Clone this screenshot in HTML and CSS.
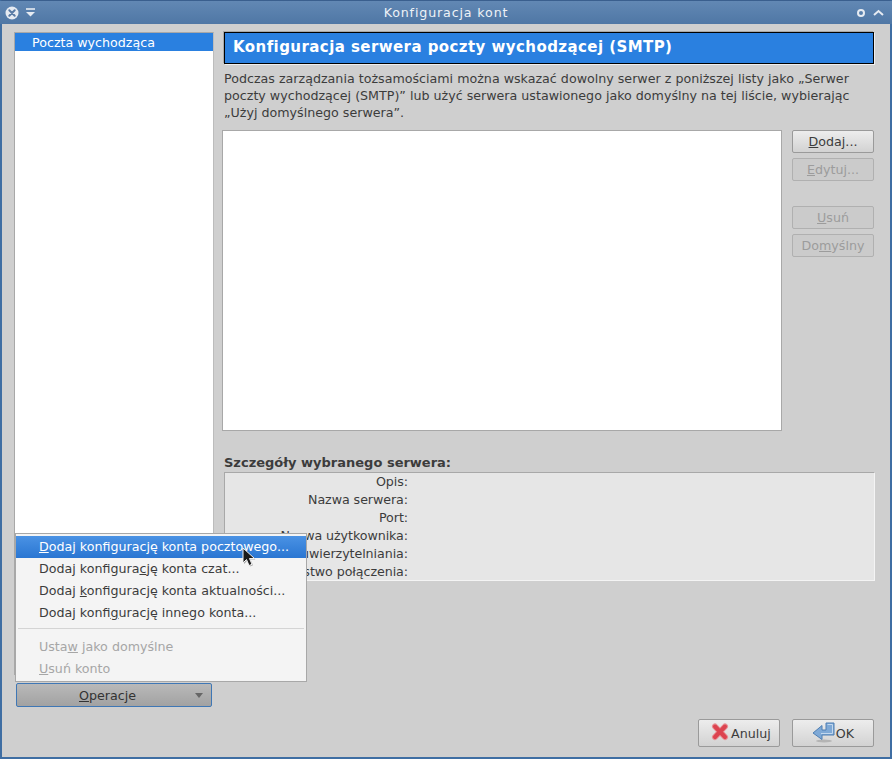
FILE: index.html
```html
<!DOCTYPE html>
<html lang="pl">
<head>
<meta charset="utf-8">
<title>Konfiguracja kont</title>
<link rel="stylesheet" href="styles.css">
</head>
<body>
<div class="window">
  <header class="titlebar">
    <div class="tb-left">
      <svg class="tb-close" width="14" height="14" viewBox="0 0 14 14"><circle cx="7" cy="7" r="6.5" fill="#e6ebf2"/><path d="M4.3 4.3l5.4 5.4M9.700 4.300l-5.400 5.400" stroke="#5a7ca6" stroke-width="2" stroke-linecap="round"/></svg>
      <svg class="tb-shade" width="12" height="12" viewBox="0 0 12 12"><path d="M1 2h9" stroke="#e6ebf2" stroke-width="1.600"/><path d="M1 5h9l-4.500 4.500z" fill="#e6ebf2"/></svg>
    </div>
    <div class="tb-title">Konfiguracja kont</div>
    <div class="tb-right">
      <svg width="10" height="10" viewBox="0 0 10 10"><circle cx="5" cy="5" r="3" fill="none" stroke="#e6ebf2" stroke-width="2"/></svg>
      <svg width="11" height="10" viewBox="0 0 11 10"><path d="M1 7l4.500-4 4.500 4" fill="none" stroke="#e6ebf2" stroke-width="2"/></svg>
    </div>
  </header>

  <main class="content">
    <div class="top">
      <aside class="sidebar">
        <div class="tree">
          <div class="tree-row">Poczta wychodząca</div>
        </div>
        <button class="btn btn-menu"><span class="btn-menu-label"><u>O</u>peracje</span><span class="arrow"></span></button>
      </aside>

      <section class="panel">
        <h1 class="banner">Konfiguracja serwera poczty wychodzącej (SMTP)</h1>
        <p class="desc">Podczas zarządzania tożsamościami można wskazać dowolny serwer z poniższej listy jako „Serwer poczty wychodzącej (SMTP)” lub użyć serwera ustawionego jako domyślny na tej liście, wybierając „Użyj domyślnego serwera”.</p>
        <div class="servers">
          <div class="server-list"></div>
          <div class="server-btns">
            <button class="btn"><u>D</u>odaj...</button>
            <button class="btn off"><u>E</u>dytuj...</button>
            <button class="btn off gap-top"><u>U</u>suń</button>
            <button class="btn off">Do<u>m</u>yślny</button>
          </div>
        </div>
        <div class="details-title">Szczegóły wybranego serwera:</div>
        <div class="details">
          <div class="lbl">Opis:</div>
          <div class="lbl">Nazwa serwera:</div>
          <div class="lbl">Port:</div>
          <div class="lbl">Nazwa użytkownika:</div>
          <div class="lbl">Metoda uwierzytelniania:</div>
          <div class="lbl">Bezpieczeństwo połączenia:</div>
        </div>
      </section>
    </div>

    <footer class="actions">
      <button class="btn btn-act">
        <svg width="24" height="24" viewBox="0 0 24 24"><path d="M8 5.500l10 10.500M18 5.500L8 16" fill="none" stroke="#e88f94" stroke-width="6" stroke-linecap="round"/><path d="M8 5.500l10 10.500M18 5.500L8 16" fill="none" stroke="#dc4450" stroke-width="4" stroke-linecap="round"/></svg>
        <span>Anuluj</span>
      </button>
      <button class="btn btn-act">
        <svg width="24" height="24" viewBox="0 0 24 24"><ellipse cx="12" cy="20" rx="8" ry="1.500" fill="#b4b4b4"/><path d="M14 2h8v12H10v4.500L1 12l9-7.500V9h4z" fill="#7fa9d6" stroke="#4f7fb3" stroke-width="1"/><path d="M15.500 3.500h5v9H9" fill="none" stroke="#c3d8ee" stroke-width="1"/></svg>
        <span>OK</span>
      </button>
    </footer>
  </main>

  <div class="menu">
    <div class="mi hot"><u>D</u>odaj konfigurację konta pocztowego...</div>
    <div class="mi">Dodaj konfigura<u>c</u>ję konta czat...</div>
    <div class="mi">Dodaj <u>k</u>onfigurację konta aktualności...</div>
    <div class="mi">Dodaj konfi<u>g</u>urację innego konta...</div>
    <div class="sep"></div>
    <div class="mi dis">Usta<u>w</u> jako domyślne</div>
    <div class="mi dis"><u>U</u>suń konto</div>
  </div>

  <svg class="cursor" width="17" height="22" viewBox="0 0 17 22"><path d="M3 2v15l3.500-3.500 2.500 6 3-1.200-2.500-5.800h5z" fill="#000" fill-opacity=".3"/><path d="M2 1v15l3.500-3.500 2.500 6 3-1.200-2.500-5.800h5z" fill="#1a1a1a" stroke="#f2f2f2" stroke-width="1"/></svg>
</div>
</body>
</html>
```
FILE: styles.css
```css
* { box-sizing: border-box; }
html, body { margin: 0; padding: 0; }
body {
  width: 892px;
  height: 759px;
  overflow: hidden;
  font-family: "DejaVu Sans", sans-serif;
  font-size: 12.67px;
  color: #3c3c3c;
}
.window {
  position: relative;
  width: 892px;
  height: 759px;
  display: flex;
  flex-direction: column;
  background: #cfcfcf;
  border: 2px solid #3f6ea3;
  border-top: 1px solid #3a5f8e;
}
.titlebar {
  height: 23px;
  flex: none;
  display: flex;
  align-items: center;
  justify-content: space-between;
  padding: 0 8px 0 4px;
  background: linear-gradient(#6288b4, #4f77a5);
  color: #eef2f7;
  margin: 0 -2px;
}
.tb-left, .tb-right { display: flex; align-items: center; gap: 6px; width: 50px; }
.tb-left { padding-left: 1px; width: 54px; }
.tb-right { justify-content: flex-end; gap: 7px; }
.tb-title { font-size: 12.67px; letter-spacing: .85px; }
.content {
  flex: 1;
  display: flex;
  flex-direction: column;
  padding: 8px 16px 10px 12px;
}
.top { flex: 1; display: flex; min-height: 0; }
.sidebar {
  width: 200px;
  flex: none;
  display: flex;
  flex-direction: column;
  margin-right: 8px;
}
.tree {
  flex: 1;
  background: #fff;
  border: 1px solid #a8a8a8;
  border-right-color: #bcbcbc;
}
.tree-row {
  height: 18px;
  line-height: 19px;
  padding-left: 17px;
  background: #2a80e0;
  color: #fff;
}
.panel { flex: 1; min-width: 0; display: flex; flex-direction: column; }
.banner {
  margin: 0 0 0 2px;
  height: 32px;
  line-height: 29px;
  padding-left: 8px;
  font-size: 15px;
  font-weight: 700;
  letter-spacing: .43px;
  color: #fff;
  background: #2a80e0;
  border: 1px solid #000;
  box-shadow: 1px 1px 0 #f0f0f0, -1px -1px 0 #a8a8a8;
}
.desc {
  margin: 6px 0 0 2px;
  line-height: 17px;
  height: 51px;
  width: 650px;
}
.servers { display: flex; margin-top: 9px; }
.server-list {
  width: 560px;
  height: 301px;
  background: #fff;
  border: 1px solid #a8a8a8;
}
.server-btns {
  margin-left: 10px;
  display: flex;
  flex-direction: column;
  gap: 5px;
}
.btn {
  font: inherit;
  width: 82px;
  height: 23px;
  padding: 0;
  color: #3c3c3c;
  background: linear-gradient(#ededed, #d2d2d2);
  border: 1px solid #9a9a9a;
  border-radius: 2px;
  display: flex;
  align-items: center;
  justify-content: center;
}
.off {
  color: #9c9c9c;
  background: #cbcbcb;
  border-color: #b0b0b0;
}
.gap-top { margin-top: 20px; }
.btn-menu {
  width: 196px;
  margin: 8px 0 3px 2px;
  height: 24px;
  padding: 0 8px 0 0;
  background: linear-gradient(#b9b9b9, #a2a2a2);
  border: 1px solid #3f77b5;
  color: #333;
}
.btn-menu-label { flex: 1; text-align: center; padding-left: 3px; }
.arrow {
  width: 0;
  height: 0;
  border-left: 4px solid transparent;
  border-right: 4px solid transparent;
  border-top: 5px solid #666;
}
.details-title {
  margin: 24px 0 0 2px;
  height: 17px;
  line-height: 15px;
  font-weight: 700;
  font-size: 13px;
}
.details {
  margin: 0 0 0 2px;
  width: 651px;
  height: 109px;
  background: #e6e6e6;
  border: 1px solid #a8a8a8;
  border-bottom-color: #f4f4f4;
  border-right-color: #f4f4f4;
  padding-right: 466px;
}
.lbl {
  height: 18px;
  line-height: 18px;
  text-align: right;
  white-space: nowrap;
  letter-spacing: -.07px;
}
.actions {
  flex: none;
  display: flex;
  justify-content: flex-end;
  gap: 12px;
  margin-top: 9px;
}
.btn-act {
  height: 28px;
  gap: 0;
}
.btn-act svg { flex: none; }
.menu {
  position: absolute;
  left: 13px;
  top: 532px;
  width: 292px;
  height: 149px;
  background: #f4f4f4;
  border: 1px solid #a8a8a8;
  padding-top: 2px;
}
.mi {
  height: 22px;
  line-height: 22px;
  padding-left: 23px;
  white-space: nowrap;
}
.hot {
  color: #fff;
  background: linear-gradient(#4a92e4, #2a76d2);
}
.dis { color: #a6a6a6; }
.sep {
  height: 1px;
  background: #d4d4d4;
  margin: 4px 2px 7px 2px;
}
.cursor {
  position: absolute;
  left: 239px;
  top: 546px;
}
```
